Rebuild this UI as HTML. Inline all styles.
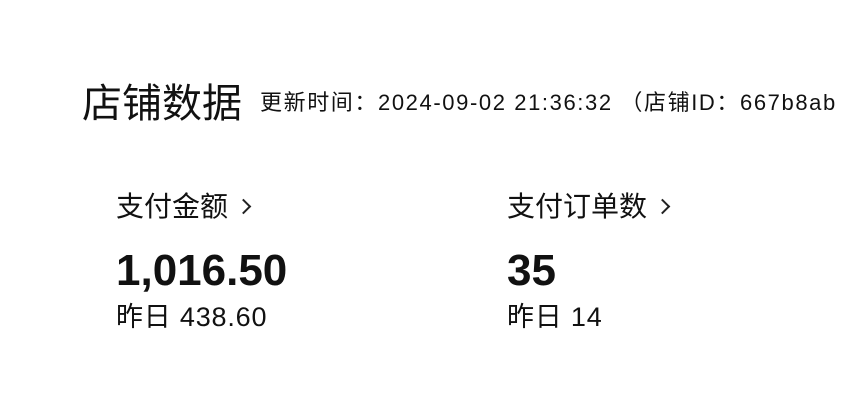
<!DOCTYPE html>
<html><head><meta charset="utf-8"><style>
html,body{margin:0;padding:0;background:#fff;width:845px;height:419px;overflow:hidden}
body{position:relative;font-family:"Liberation Sans","Noto Sans CJK SC",sans-serif;color:#111}
.a{position:absolute;white-space:nowrap;line-height:1}
.t{left:82px;top:84px;font-size:40px}
.s{left:260px;top:92px;font-size:22px;letter-spacing:1.6px}
.l{font-size:28px;top:193px}
.n{font-size:44px;font-weight:bold;top:249px}
.y{font-size:27px;top:304px;letter-spacing:0.8px}
.arr{display:inline-block;width:9px;height:9px;border-right:2px solid #222;border-top:2px solid #222;transform:rotate(45deg);margin-left:10px;position:relative;top:-4px}
</style></head><body>
<div class="a t">店铺数据</div>
<div class="a s">更新时间：2024-09-02 21:36:32 （店铺ID：667b8ab</div>
<div class="a l" style="left:116px">支付金额<span class="arr"></span></div>
<div class="a n" style="left:116px">1,016.50</div>
<div class="a y" style="left:116px">昨日 438.60</div>
<div class="a l" style="left:507px">支付订单数<span class="arr"></span></div>
<div class="a n" style="left:507px">35</div>
<div class="a y" style="left:507px">昨日 14</div>
</body></html>
